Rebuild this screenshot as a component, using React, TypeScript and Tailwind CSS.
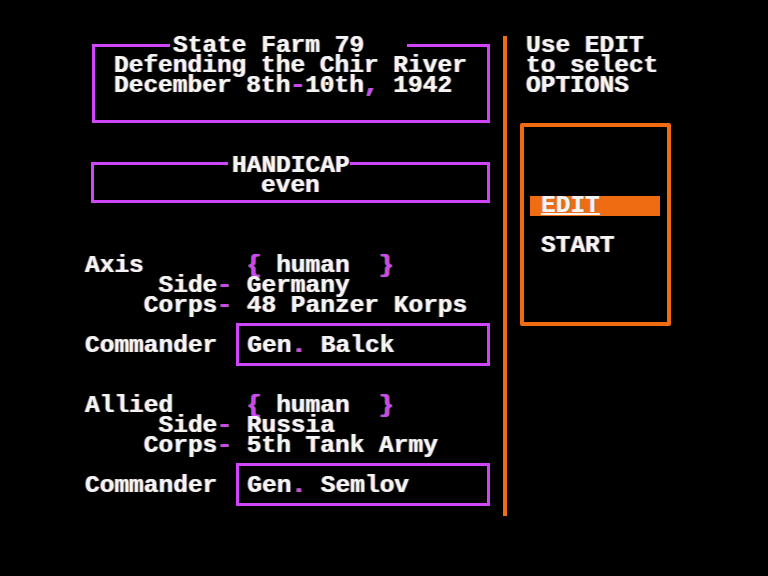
const PURPLE = 'text-[#cf45fa]'

function Row({ children, className = '' }: { children?: React.ReactNode; className?: string }) {
  return <div className={`h-[20px] whitespace-pre ${className}`}>{children}</div>
}

function P({ children }: { children: React.ReactNode }) {
  return <span className={PURPLE}>{children}</span>
}

function Player({ name, side, corps, commander }: { name: string; side: string; corps: string; commander: string }) {
  return (
    <div>
      <Row>{name.padEnd(11, ' ')}<P>{'{'}</P>{' human  '}<P>{'}'}</P></Row>
      <Row>{'     Side'}<P>-</P>{' ' + side}</Row>
      <Row>{'    Corps'}<P>-</P>{' ' + corps}</Row>
      <div className="flex items-start mt-[7px]">
        <div className="mt-[13px] h-[20px]">Commander</div>
        <div className="ml-[19px] w-[254px] h-[43px] border-[3px] border-[#cf45fa] pt-[10px] pl-[8px] whitespace-pre">
          {commander.split('.')[0]}<P>.</P>{commander.split('.')[1]}
        </div>
      </div>
    </div>
  )
}

export default function App() {
  return (
    <div className="w-[768px] h-[576px] bg-black overflow-hidden font-['Liberation_Mono',monospace] font-bold text-[24.5px] leading-[20px] text-[#f4f4f4] [text-shadow:-1px_0_rgba(255,150,70,0.55),1px_0_rgba(90,170,255,0.55)]">
      <div className="flex pt-[36px] pl-[85px]">
        {/* left column */}
        <div className="w-[408px]">
          {/* scenario box */}
          <div className="ml-[7px] mt-[8px] w-[398px] h-[79px] border-[3px] border-[#cf45fa]">
            <div className="-mt-[11px] h-[20px]">
              <span className="inline-block h-[20px] ml-[75px] w-[237px] pl-[3px] bg-black whitespace-pre">State Farm 79</span>
            </div>
            <Row className="ml-[19px]">Defending the Chir River</Row>
            <Row className="ml-[19px]">December 8th<P>-</P>10th<P>,</P> 1942</Row>
          </div>

          {/* handicap box */}
          <div className="ml-[6px] mt-[39px] w-[399px] h-[41px] border-[3px] border-[#cf45fa]">
            <div className="-mt-[9px] h-[20px]">
              <span className="inline-block h-[20px] ml-[134px] w-[122px] pl-[4px] bg-black">HANDICAP</span>
            </div>
            <Row className="ml-[167px]">even</Row>
          </div>

          <div className="mt-[53px]">
            <Player name="Axis" side="Germany" corps="48 Panzer Korps" commander="Gen. Balck" />
          </div>
          <div className="mt-[30px]">
            <Player name="Allied" side="Russia" corps="5th Tank Army" commander="Gen. Semlov" />
          </div>
        </div>

        {/* divider */}
        <div className="ml-[10px] w-[4px] h-[480px] bg-[#f06c12] shrink-0" />

        {/* right column */}
        <div className="ml-[13px]">
          <div className="pl-[6px]">
            <Row>Use EDIT</Row>
            <Row>to select</Row>
            <Row>OPTIONS</Row>
          </div>
          <div className="mt-[27px] w-[151px] h-[203px] border-[4px] border-[#f06c12] rounded-[2px]">
            <div className="mt-[69px] ml-[6px] w-[130px] h-[20px] bg-[#f06c12] pl-[11px] underline decoration-2">EDIT</div>
            <Row className="mt-[20px] pl-[17px]">START</Row>
          </div>
        </div>
      </div>
    </div>
  )
}
